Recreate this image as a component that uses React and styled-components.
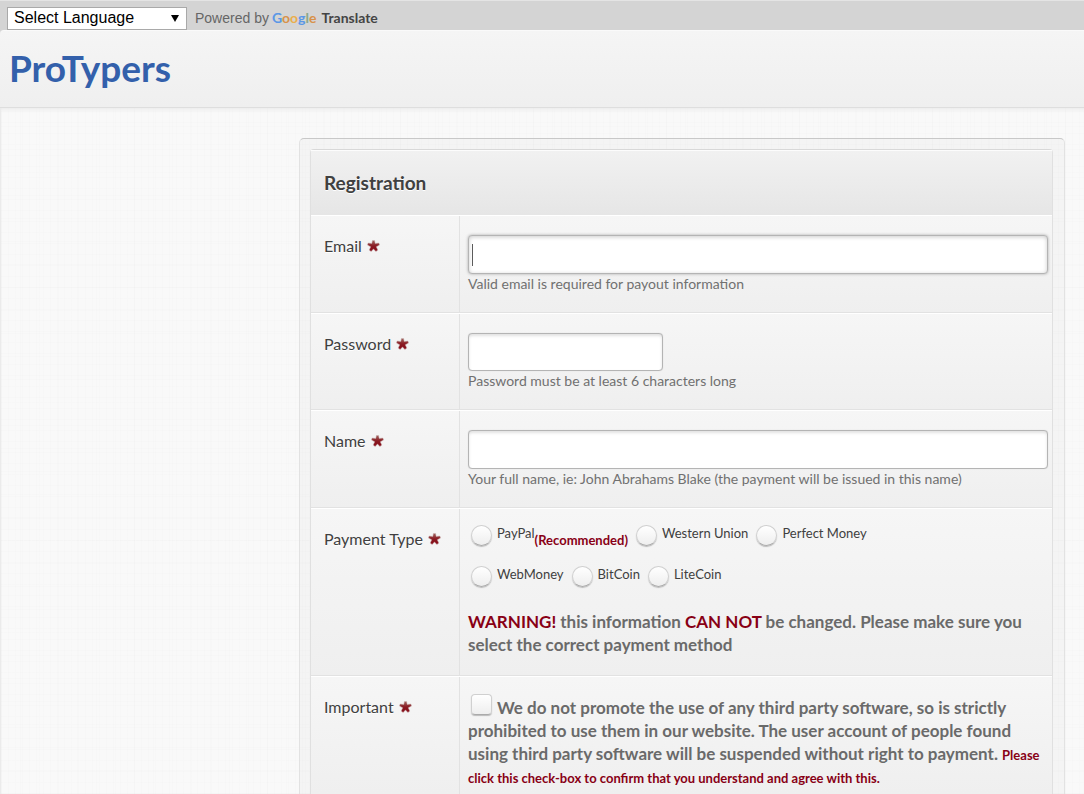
import React from 'react';
import styled, { createGlobalStyle, css } from 'styled-components';

const GlobalStyle = createGlobalStyle`
  *, *::before, *::after { box-sizing: border-box; }
  html, body { margin: 0; }
  body {
    background: #f9f9f9;
    color: #404040;
    font-family: Lato, "Open Sans", sans-serif;
    font-size: 14px;
    line-height: 20px;
  }
`;

const Page = styled.div`
  min-height: 100vh;
  display: flex;
  flex-direction: column;
  background: #d4d4d4;
`;

const LanguageBar = styled.div`
  display: flex;
  align-items: center;
  gap: 8px;
  height: 30px;
  padding: 5px 7px 0;
  border-top: 1px solid #e4e4e4;
  font-family: "Liberation Sans", Arial, sans-serif;
  color: #666;
`;

const SelectBox = styled.div`
  position: relative;
  width: 180px;
  &::after {
    content: "";
    position: absolute;
    right: 8px;
    top: 8px;
    border: 4px solid transparent;
    border-top: 7px solid #000;
    border-bottom: 0;
    pointer-events: none;
  }
`;

const Select = styled.select`
  display: block;
  appearance: none;
  width: 100%;
  height: 23px;
  padding: 0 24px 0 6px;
  border: 1px solid #a9a9a9;
  border-radius: 0;
  background: #fff;
  color: #000;
  font: 16px/20px "Liberation Sans", Arial, sans-serif;
`;

const Powered = styled.span`
  display: flex;
  align-items: center;
  gap: 3px;
`;

const Brand = styled.a`
  display: flex;
  gap: 5px;
  color: #444;
  font-family: Lato, "Open Sans", sans-serif;
  font-weight: 700;
  text-decoration: none;
`;

const Letter = styled.span`
  color: ${(p) => p.$color};
`;

const Header = styled.header`
  height: 78px;
  padding: 13px 9px 0;
  border-top: 1px solid #fafafa;
  border-bottom: 1px solid #dedede;
  border-top-left-radius: 4px;
  background: linear-gradient(#f5f5f5, #efefef);
`;

const Logo = styled.a`
  color: #3360ab;
  font-size: 37px;
  line-height: 48px;
  font-weight: 700;
  text-decoration: none;
`;

const weave = css`
  background-image:
    repeating-linear-gradient(90deg, rgba(0,0,0,.008) 0 1px, transparent 1px 7px),
    repeating-linear-gradient(90deg, rgba(0,0,0,.008) 0 1px, transparent 1px 19px),
    repeating-linear-gradient(0deg, rgba(0,0,0,.008) 0 1px, transparent 1px 11px),
    repeating-linear-gradient(0deg, rgba(0,0,0,.008) 0 1px, transparent 1px 23px);
`;

const Main = styled.main`
  flex: 1;
  display: flex;
  padding: 30px 19px 0 298px;
  border-left: 1px solid #ebebeb;
  background-color: #f9f9f9;
  ${weave}
  box-shadow: inset 0 4px 4px -3px #e8e8e8;
`;

const Frame = styled.section`
  flex: 1;
  display: flex;
  padding: 10px 11px 0 10px;
  border: 1px solid #e2e2e2;
  border-top-color: #c8c8c8;
  border-bottom: 0;
  border-radius: 5px 5px 0 0;
  background: rgba(0, 0, 0, .02);
`;

const Form = styled.form`
  flex: 1;
  display: flex;
  flex-direction: column;
  border: 1px solid #e0e0e0;
  border-top-color: #d8d8d8;
  border-bottom: 0;
  border-radius: 4px 4px 0 0;
`;

const Title = styled.h1`
  height: 65px;
  margin: 0;
  padding: 20px 13px;
  border-top: 1px solid #fcfcfc;
  background: linear-gradient(#f1f1f1, #e6e6e6);
  font-size: 19px;
  line-height: 24px;
  font-weight: 700;
  text-shadow: 0 1px 0 #fff;
`;

const Row = styled.div`
  display: grid;
  grid-template-columns: 149px 1fr;
  flex: ${(p) => (p.$grow ? '1 0 auto' : 'none')};
  border-top: 1px solid #fff;
  border-bottom: ${(p) => (p.$grow ? '0' : '1px solid #e2e2e2')};
  background: linear-gradient(#f6f6f6, #efefef);
`;

const Caption = styled.div`
  display: flex;
  align-items: flex-start;
  gap: 5px;
  padding: 20px 13px;
  border-right: 1px solid #e2e2e2;
  font-size: 16px;
  line-height: 20px;
  text-shadow: 0 1px 0 #fff;
`;

const RequiredMark = styled.span`
  display: flex;
  padding-top: 4px;
`;

const Field = styled.div`
  padding: ${(p) => p.$pad || '19px 4px 18px 8px'};
`;

const TextInput = styled.input`
  display: block;
  width: ${(p) => (p.$short ? '195px' : '100%')};
  height: ${(p) => (p.$short ? '38px' : '39px')};
  padding: 0 8px;
  border: 1px solid #b4b4b4;
  border-radius: 4px;
  outline: 0;
  background: #fff;
  box-shadow: inset 0 2px 3px #e2e2e2, 0 0 1px #ccc;
  font: inherit;
  ${(p) => p.$active && css`
    background: linear-gradient(#555, #555) 3px center / 1px 22px no-repeat #fff;
    box-shadow: inset 0 1px 4px #ccc, 0 0 3px #aaa;
  `}
`;

const Hint = styled.p`
  margin: 0;
  color: #707070;
  font-size: 14px;
  line-height: 20px;
`;

const Options = styled.div`
  display: flex;
  flex-wrap: wrap;
  gap: 0 8px;
  padding-left: 3px;
`;

const Option = styled.label`
  display: flex;
  align-items: flex-start;
  height: 41px;
  font-size: 13px;
  line-height: 16px;
`;

const Break = styled.span`
  flex-basis: 100%;
`;

const Recommended = styled.strong`
  padding-top: 7px;
  color: #880015;
`;

const Tick = styled.input`
  appearance: none;
  flex: none;
  width: 21px;
  height: 21px;
  margin: 0 5px 0 0;
  border: 1px solid #d0d0d0;
  border-bottom-color: #aaa;
  border-radius: ${(p) => (p.type === 'radio' ? '50%' : '4px')};
  background: linear-gradient(#fff, #eee);
  box-shadow: 0 1px 1px #bbb;
  &:checked { background: #999; }
  ${(p) => p.type === 'checkbox' && css`
    margin-left: 3px;
    vertical-align: -1px;
  `}
`;

const Notice = styled.p`
  margin: 0;
  padding-top: ${(p) => (p.$spaced ? '3px' : '0')};
  color: #6a6a6a;
  font-size: 17px;
  line-height: 23px;
  font-weight: 700;
`;

const Red = styled.span`
  color: #880015;
  ${(p) => p.$small && css`
    font-size: 13px;
    line-height: 18px;
  `}
`;

function Asterisk() {
  return (
    <svg width="13" height="12" viewBox="0 0 13 12" role="img" aria-label="required">
      <defs>
        <linearGradient id="star" x1="0" y1="0" x2="0" y2="1">
          <stop offset="0" stopColor="#a06560" />
          <stop offset=".5" stopColor="#8a1a22" />
          <stop offset="1" stopColor="#860a18" />
        </linearGradient>
      </defs>
      <path
        d="M5.4 0.5h2.2L8.2 3.4l3.7-.4.6 2-3.2 1.8 1.5 3.3-1.9 1.3L6.5 9 4.1 11.4 2.2 10.1l1.5-3.3L.5 5l.6-2 3.7.4z"
        fill="url(#star)"
        stroke="#c9b0ae"
        strokeWidth=".5"
      />
    </svg>
  );
}

function FormRow({ id, label, pad, grow, children }) {
  return (
    <Row $grow={grow}>
      <Caption>
        <label htmlFor={id}>{label}</label>
        <RequiredMark><Asterisk /></RequiredMark>
      </Caption>
      <Field $pad={pad}>{children}</Field>
    </Row>
  );
}

function Choice({ id, name, children }) {
  return (
    <Option>
      <Tick type="radio" name="payment" id={id} value={name} />
      <span>{name}</span>
      {children}
    </Option>
  );
}

const google = [
  ['G', '#5a97e6'], ['o', '#d8924a'], ['o', '#eaae4c'], ['g', '#5a97e6'], ['l', '#8aa88a'], ['e', '#d8924a'],
];

export default function App() {
  return (
    <>
      <GlobalStyle />
      <Page>
        <LanguageBar>
          <SelectBox>
            <Select aria-label="Language">
              <option>Select Language</option>
            </Select>
          </SelectBox>
          <Powered>
            Powered by
            <Brand href="#translate">
              <span>
                {google.map(([letter, color], i) => (
                  <Letter key={i} $color={color}>{letter}</Letter>
                ))}
              </span>
              <span>Translate</span>
            </Brand>
          </Powered>
        </LanguageBar>
        <Header>
          <Logo href="#home">ProTypers</Logo>
        </Header>
        <Main>
          <Frame>
            <Form>
              <Title>Registration</Title>
              <FormRow id="email" label="Email">
                <TextInput id="email" type="email" $active />
                <Hint>Valid email is required for payout information</Hint>
              </FormRow>
              <FormRow id="password" label="Password">
                <TextInput id="password" type="password" $short />
                <Hint>Password must be at least 6 characters long</Hint>
              </FormRow>
              <FormRow id="name" label="Name">
                <TextInput id="name" type="text" />
                <Hint>Your full name, ie: John Abrahams Blake (the payment will be issued in this name)</Hint>
              </FormRow>
              <FormRow id="paypal" label="Payment Type" pad="16px 12px 19px 8px">
                <Options>
                  <Choice id="paypal" name="PayPal">
                    <Recommended>(Recommended)</Recommended>
                  </Choice>
                  <Choice id="western-union" name="Western Union" />
                  <Choice id="perfect-money" name="Perfect Money" />
                  <Break />
                  <Choice id="webmoney" name="WebMoney" />
                  <Choice id="bitcoin" name="BitCoin" />
                  <Choice id="litecoin" name="LiteCoin" />
                </Options>
                <Notice $spaced>
                  <Red>WARNING!</Red> this information <Red>CAN NOT</Red> be changed. Please make
                  sure you select the correct payment method
                </Notice>
              </FormRow>
              <FormRow id="agree" label="Important" pad="17px 8px 0 8px" grow>
                <Notice>
                  <Tick id="agree" type="checkbox" />
                  We do not promote the use of any third party software, so is strictly prohibited
                  to use them in our website. The user account of people found using third party
                  software will be suspended without right to payment.{' '}
                  <Red $small>
                    Please click this check-box to confirm that you understand and agree with this.
                  </Red>
                </Notice>
              </FormRow>
            </Form>
          </Frame>
        </Main>
      </Page>
    </>
  );
}
